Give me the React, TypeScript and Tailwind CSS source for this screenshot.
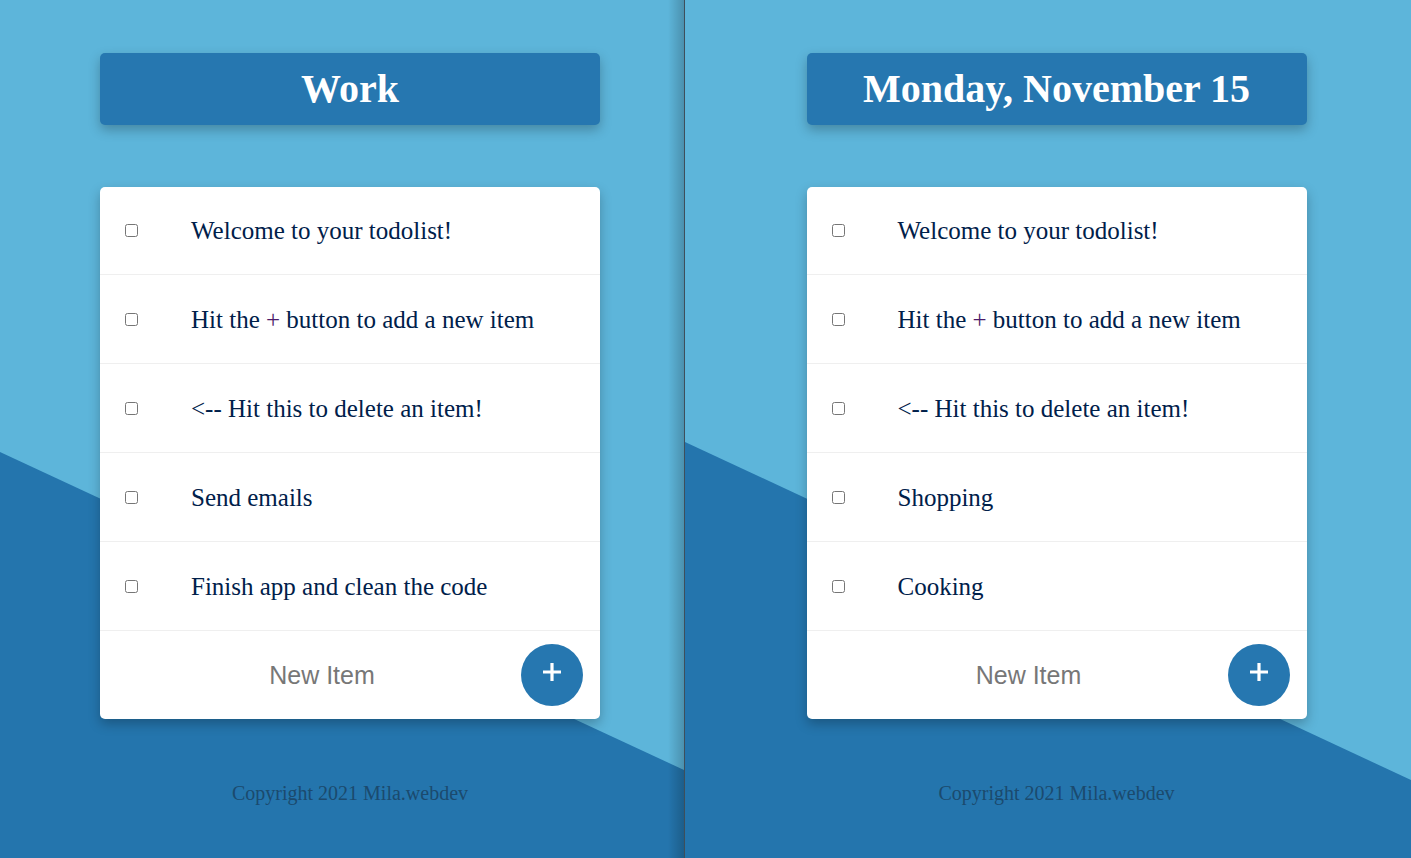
import React from "react";

const serif = { fontFamily: '"Liberation Serif", "Times New Roman", serif' };
const sans = { fontFamily: '"Liberation Sans", Arial, sans-serif' };

function Item({ text }: { text: React.ReactNode }) {
  return (
    <div className="flex h-[89px] items-center border-b border-[#efefef] pl-[25px]">
      <input type="checkbox" className="m-0 h-[13px] w-[13px] shrink-0" />
      <p className="ml-[53px] text-[25px] leading-none text-[#00204a]" style={serif}>
        {text}
      </p>
    </div>
  );
}

function Panel({
  title,
  items,
  width,
  y1,
  y2,
  shade,
  left,
}: {
  title: string;
  items: React.ReactNode[];
  width: number;
  y1: number;
  y2: number;
  shade?: boolean;
  left: boolean;
}) {
  return (
    <div className="relative h-[858px] shrink-0 overflow-hidden bg-[#5db5da]" style={{ width }}>
      <svg
        className="absolute inset-0 h-full w-full"
        viewBox={`0 0 ${width} 858`}
        preserveAspectRatio="none"
      >
        <polygon points={`0,${y1} ${width},${y2} ${width},858 0,858`} fill="#2475ad" />
      </svg>
      {shade && (
        <div className="absolute right-0 top-0 bottom-0 w-[16px] bg-gradient-to-r from-transparent to-black/20" />
      )}
      <div className={`relative flex flex-col items-center pt-[53px] ${left ? "pl-[16px]" : "pl-[17px]"}`}>
        <div className="w-[500px]">
          <div className="flex h-[72px] items-center justify-center rounded-[5px] bg-[#2677b0] shadow-[0_5px_12px_rgba(0,0,0,0.25)]">
            <h1 className="text-[40px] font-bold leading-none text-white" style={serif}>
              {title}
            </h1>
          </div>
          <div className="mt-[62px] overflow-hidden rounded-[5px] bg-white shadow-[0_5px_12px_rgba(0,0,0,0.25)]">
            <div className="-mt-px">
              {items.map((t, i) => (
                <Item key={i} text={t} />
              ))}
            </div>
            <div className="flex h-[88px] items-center pl-[23px] pr-[17px]">
              <input
                type="text"
                placeholder="New Item"
                className="h-[50px] min-w-0 flex-1 bg-transparent text-center text-[25px] text-[#333] outline-none placeholder:text-[#777]"
                style={sans}
              />
              <button className="flex h-[62px] w-[62px] shrink-0 items-center justify-center rounded-full bg-[#2677b0]">
                <svg width="20" height="20" viewBox="0 0 20 20" className="-translate-y-[3px]">
                  <path d="M10 1v18M1 10h18" stroke="white" strokeWidth="3.2" fill="none" />
                </svg>
              </button>
            </div>
          </div>
          <p className="mt-[63px] text-center text-[20px] leading-[23px] text-[#1b4a6e]" style={serif}>
            Copyright 2021 Mila.webdev
          </p>
        </div>
      </div>
    </div>
  );
}

const plusText = (
  <>
    Hit the <span className="text-[#4a1a6a]">+</span> button to add a new item
  </>
);

export default function App() {
  return (
    <div className="flex h-[858px] w-[1411px] overflow-hidden">
      <Panel
        title="Work"
        width={684}
        y1={452}
        y2={770}
        shade
        left
        items={[
          "Welcome to your todolist!",
          plusText,
          "<-- Hit this to delete an item!",
          "Send emails",
          "Finish app and clean the code",
        ]}
      />
      <div className="w-px shrink-0 bg-[#3e4f5b]" />
      <Panel
        title="Monday, November 15"
        width={726}
        y1={442}
        y2={780}
        left={false}
        items={[
          "Welcome to your todolist!",
          plusText,
          "<-- Hit this to delete an item!",
          "Shopping",
          "Cooking",
        ]}
      />
    </div>
  );
}
